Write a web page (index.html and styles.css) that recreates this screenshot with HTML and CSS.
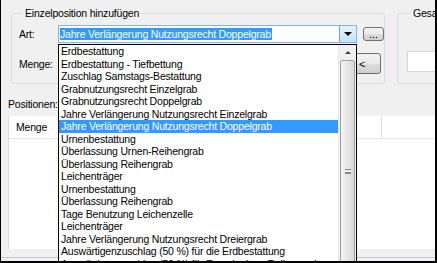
FILE: index.html
```html
<!DOCTYPE html>
<html lang="de">
<head>
    <meta charset="UTF-8">
    <title>Einzelposition hinzufügen</title>
    <link rel="stylesheet" href="styles.css">
</head>
<body>
<div class="window">

    <!-- Obere Gruppen -->
    <div class="groups">
        <fieldset class="group group-main">
            <legend>Einzelposition hinzufügen</legend>
            <div class="row row-art">
                <span class="lbl">Art:</span>
                <div class="combo">
                    <span class="combo-text"><span class="sel">Jahre Verlängerung Nutzungsrecht Doppelgrab</span></span>
                    <span class="combo-btn"><span class="tri"></span></span>
                </div>
                <button class="btn btn-dots">...</button>
            </div>
            <div class="row row-menge">
                <span class="lbl">Menge:</span>
                <div class="input input-menge"></div>
                <button class="btn btn-add">&lt;</button>
            </div>
        </fieldset>
        <fieldset class="group group-sum">
            <legend>Gesa</legend>
            <div class="input input-sum"></div>
        </fieldset>
    </div>

    <!-- Positionen -->
    <div class="pos-label">Positionen:</div>
    <div class="listview">
        <div class="lv-head">
            <div class="lv-col lv-col-menge">Menge</div>
            <div class="lv-col lv-col-text"></div>
            <div class="lv-col lv-col-rest"></div>
        </div>
    </div>
    <div class="statusline"></div>

    <!-- aufgeklappte Liste der Combobox -->
    <div class="dropdown">
        <ul class="dd-items">
            <li>Erdbestattung</li>
            <li>Erdbestattung - Tiefbettung</li>
            <li>Zuschlag Samstags-Bestattung</li>
            <li>Grabnutzungsrecht Einzelgrab</li>
            <li>Grabnutzungsrecht Doppelgrab</li>
            <li>Jahre Verlängerung Nutzungsrecht Einzelgrab</li>
            <li class="active">Jahre Verlängerung Nutzungsrecht Doppelgrab</li>
            <li>Urnenbestattung</li>
            <li>Überlassung Urnen-Reihengrab</li>
            <li>Überlassung Reihengrab</li>
            <li>Leichenträger</li>
            <li>Urnenbestattung</li>
            <li>Überlassung Reihengrab</li>
            <li>Tage Benutzung Leichenzelle</li>
            <li>Leichenträger</li>
            <li>Jahre Verlängerung Nutzungsrecht Dreiergrab</li>
            <li>Auswärtigenzuschlag (50 %) für die Erdbestattung</li>
            <li>Auswärtigenzuschlag (50 %) für Erwerb eines Reihengrabes</li>
        </ul>
        <div class="scrollbar">
            <div class="sb-up"><span class="sb-tri"></span></div>
            <div class="sb-thumb"><span class="grip"></span></div>
        </div>
    </div>

</div>
</body>
</html>
```

FILE: styles.css
```css
/* Allgemein */
html, body {
    margin: 0;
    padding: 0;
    width: 437px;
    height: 263px;
    overflow: hidden;
    background: #f0f0f0;
    font-family: "Liberation Sans", Arial, sans-serif;
    font-size: 10.5px;
    letter-spacing: -0.2px;
    color: #000;
}

.window {
    position: relative;
    box-sizing: border-box;
    height: 263px;
    border-left: 1px solid #000;
    border-right: 2px solid #000;
    border-bottom: 2px solid #000;
    overflow: hidden;
}

/* Gruppen oben */
.groups {
    display: flex;
    gap: 12px;
    padding: 7px 0 0 10px;
    height: 77px;
}

.group {
    margin: 0;
    padding: 0;
    border: 1px solid #d5dfe5;
    border-radius: 3px;
    box-sizing: border-box;
}

.group legend {
    padding: 0 2px;
    margin-left: 4px;
    line-height: 13px;
}

.group-main {
    width: 383px;
    padding: 0 0 0 7px;
}

.group-sum {
    flex: 1;
    border-right: none;
    padding: 0 0 0 9px;
    margin-right: -4px;
}

.row {
    display: flex;
    align-items: center;
}

.lbl {
    width: 39px;
}

.row-art {
    margin-top: 5px;
    height: 18px;
}

.combo {
    display: flex;
    box-sizing: border-box;
    width: 299px;
    height: 18px;
    border: 1px solid #7eb4ea;
    background: #fff;
}

.combo-text {
    flex: 1;
    padding: 1px 0 0 1px;
    line-height: 14px;
}

.sel {
    background: #3399ff;
    color: #fff;
    padding-right: 1px;
}

.combo-btn {
    width: 16px;
    display: flex;
    align-items: center;
    justify-content: center;
    background: linear-gradient(#e5f3fc, #c4e4f8);
    border-left: 1px solid #6aa6d6;
}

.tri {
    width: 0;
    height: 0;
    border-left: 4px solid transparent;
    border-right: 4px solid transparent;
    border-top: 4px solid #000;
}

.btn {
    box-sizing: border-box;
    border: 1px solid #707070;
    border-radius: 3px;
    background: linear-gradient(#f2f2f2 0%, #ebebeb 50%, #dddddd 51%, #cfcfcf 100%);
    font-family: inherit;
    font-size: 11px;
    padding: 0;
    color: #000;
}

.btn-dots {
    width: 21px;
    height: 14px;
    margin-left: 6px;
    line-height: 10px;
}

.row-menge {
    margin-top: 10px;
    height: 21px;
}

.input {
    box-sizing: border-box;
    background: #fff;
    border: 1px solid #abadb3;
}

.input-menge {
    width: 290px;
    height: 20px;
}

.btn-add {
    width: 26px;
    height: 21px;
    margin-left: 7px;
    text-align: left;
    padding-left: 3px;
}

.input-sum {
    margin-top: 31px;
    height: 21px;
    width: 60px;
    border-color: #d6d6d6;
}

/* Positionen */
.pos-label {
    margin: 14px 0 0 7px;
    line-height: 13px;
}

.listview {
    box-sizing: border-box;
    margin: 5px 0 0 7px;
    height: 133px;
    background: #fff;
    border-left: 1px solid #dcdcdc;
}

.lv-head {
    display: flex;
    height: 22px;
    border-bottom: 1px solid #e5e5e5;
    background: #fff;
}

.lv-col {
    border-right: 1px solid #e2e2e2;
    line-height: 22px;
}

.lv-col-menge {
    width: 52px;
    padding-left: 7px;
    box-sizing: border-box;
}

.lv-col-text {
    width: 320px;
}

.lv-col-rest {
    flex: 1;
    border-right: none;
}

.statusline {
    margin-top: 8px;
    height: 1px;
    background: #c5c5d2;
}

/* aufgeklappte Liste */
.dropdown {
    position: absolute;
    left: 57px;
    top: 44px;
    width: 299px;
    height: 240px;
    box-sizing: border-box;
    border: 1px solid #000;
    background: #fff;
    display: flex;
}

.dd-items {
    list-style: none;
    margin: 0;
    padding: 0;
    flex: 1;
}

.dd-items li {
    height: 12.5px;
    line-height: 12.5px;
    padding-left: 2px;
    white-space: nowrap;
    overflow: hidden;
}

.dd-items li.active {
    background: #3399ff;
    color: #fff;
}

.scrollbar {
    width: 17px;
    background: #f0f0f0;
    border-left: 1px solid #e8e8e8;
    display: flex;
    flex-direction: column;
}

.sb-up {
    height: 16px;
    display: flex;
    align-items: center;
    justify-content: center;
}

.sb-tri {
    width: 0;
    height: 0;
    border-left: 3px solid transparent;
    border-right: 3px solid transparent;
    border-bottom: 3px solid #404040;
}

.sb-thumb {
    margin: 0 1px;
    height: 240px;
    border: 1px solid #a0a0a0;
    border-radius: 2px;
    background: linear-gradient(90deg, #f3f3f3, #e6e6e6 50%, #d8d8d8);
    display: flex;
    align-items: center;
    justify-content: center;
}

.grip {
    width: 6px;
    height: 5px;
    border-top: 1px solid #888;
    border-bottom: 1px solid #888;
    box-sizing: border-box;
    background: linear-gradient(#fff 0 1px, #888 1px 2px, transparent 2px);
    background-position: 0 1px;
    background-repeat: no-repeat;
}
```
